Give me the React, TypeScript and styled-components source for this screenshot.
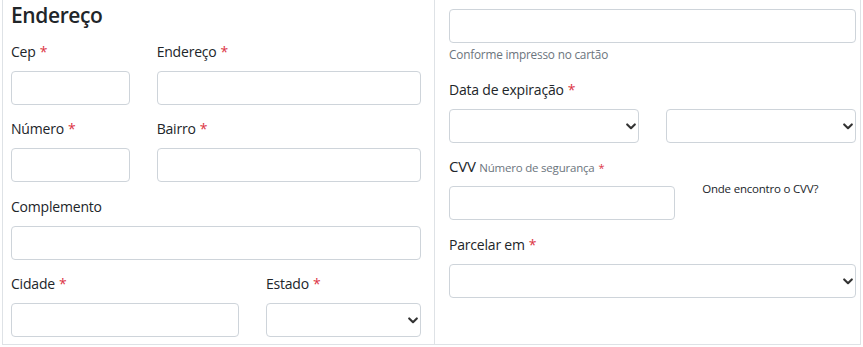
import * as React from "react";
import styled, { createGlobalStyle } from "styled-components";

const GlobalStyle = createGlobalStyle`
  body {
    margin: 0;
    background: #fff;
    font-family: "Open Sans", "Noto Sans", sans-serif;
    color: #212529;
  }
`;

const Chevron = (): JSX.Element => (
  <Arrow width="10" height="7" viewBox="0 0 10 7">
    <path d="M1.2 1.4 5 5.2 8.8 1.4" fill="none" stroke="#333" strokeWidth="2.1" strokeLinecap="round" strokeLinejoin="round" />
  </Arrow>
);

interface IfieldProps {
  label: string;
  span: number;
  required?: boolean;
  select?: boolean;
}

const Field = ({ label, span, required, select }: IfieldProps): JSX.Element => (
  <Group $span={span}>
    <Label>
      {label}
      {required && <Star>*</Star>}
    </Label>
    {select ? (
      <SelectWrap>
        <Select />
        <Chevron />
      </SelectWrap>
    ) : (
      <Input />
    )}
  </Group>
);

const App = (): JSX.Element => {
  return (
    <Wrapper>
      <GlobalStyle />
      <Panel.Left>
        <Heading>Endereço</Heading>
        <Grid>
          <Field label="Cep" span={4} required />
          <Field label="Endereço" span={8} required />
          <Field label="Número" span={4} required />
          <Field label="Bairro" span={8} required />
          <Field label="Complemento" span={12} />
          <Field label="Cidade" span={7} required />
          <Field label="Estado" span={5} required select />
        </Grid>
      </Panel.Left>

      <Panel.Right>
        <Input />
        <HelpText>Conforme impresso no cartão</HelpText>
        <Grid>
          <Group $span={12} $compact>
            <Label>
              Data de expiração<Star>*</Star>
            </Label>
          </Group>
          <Group $span={6}>
            <SelectWrap>
              <Select />
              <Chevron />
            </SelectWrap>
          </Group>
          <Group $span={6}>
            <SelectWrap>
              <Select />
              <Chevron />
            </SelectWrap>
          </Group>
          <Group $span={7}>
            <Label>
              <CvvText>CVV</CvvText> <SubLabel>Número de segurança</SubLabel>
              <Star $small>*</Star>
            </Label>
            <Input />
          </Group>
          <Group $span={5}>
            <CvvHint>Onde encontro o CVV?</CvvHint>
          </Group>
          <Field label="Parcelar em" span={12} required select />
        </Grid>
      </Panel.Right>
    </Wrapper>
  );
};

export default App;

const Wrapper = styled.div`
  display: flex;
  width: 859px;
  height: 344px;
  margin-left: 2px;
  border-bottom: 1px solid #dee2e6;
`;

const Panel = {
  Left: styled.div`
    width: 410px;
    padding: 1px 13px 0 8px;
    border-left: 1px solid #dee2e6;
  `,

  Right: styled.div`
    width: 407px;
    padding: 9px 4px 0 14px;
    border-left: 1px solid #dee2e6;
    border-right: 1px solid #dee2e6;
  `,
};

const Heading = styled.h4`
  margin: 0 0 13px;
  font-size: 21px;
  line-height: 28px;
  font-weight: 600;
  letter-spacing: -0.4px;
`;

const Grid = styled.div`
  display: grid;
  grid-template-columns: repeat(12, 1fr);
  column-gap: 27px;
`;

const Group = styled.div<{ $span: number; $compact?: boolean }>`
  grid-column: span ${(p) => p.$span};
  display: flex;
  flex-direction: column;
  margin-bottom: ${(p) => (p.$compact ? "0" : "14.4px")};
`;

const Label = styled.label`
  display: block;
  height: 20px;
  margin-bottom: 9px;
  font-size: 14px;
  line-height: 20px;
  letter-spacing: -0.2px;
  color: #212529;
  white-space: nowrap;
`;

const CvvText = styled.span`
  font-size: 15px;
  line-height: 1;
`;

const SubLabel = styled.span`
  font-size: 11.5px;
  line-height: 1;
  color: #6c757d;
`;

const Star = styled.span<{ $small?: boolean }>`
  margin-left: 4px;
  font-size: ${(p) => (p.$small ? "11px" : "14px")};
  line-height: 1;
  color: #dc3545;
`;

const Input = styled.input`
  box-sizing: border-box;
  display: block;
  width: 100%;
  height: 34px;
  margin: 0;
  border: 1px solid #ced4da;
  border-radius: 4px;
  background: #fff;
  outline: none;
`;

const SelectWrap = styled.div`
  position: relative;
  height: 34px;
`;

const Select = styled.select`
  box-sizing: border-box;
  appearance: none;
  display: block;
  width: 100%;
  height: 34px;
  margin: 0;
  border: 1px solid #ced4da;
  border-radius: 4px;
  background: #fff;
  outline: none;
`;

const Arrow = styled.svg`
  position: absolute;
  right: 3px;
  top: 14px;
  pointer-events: none;
`;

const HelpText = styled.div`
  margin: 2px 0 17px;
  font-size: 11.8px;
  line-height: 18px;
  letter-spacing: -0.2px;
  color: #6c757d;
`;

const CvvHint = styled.div`
  padding-top: 24px;
  font-size: 11.5px;
  line-height: 16px;
  letter-spacing: -0.2px;
  color: #212529;
`;
